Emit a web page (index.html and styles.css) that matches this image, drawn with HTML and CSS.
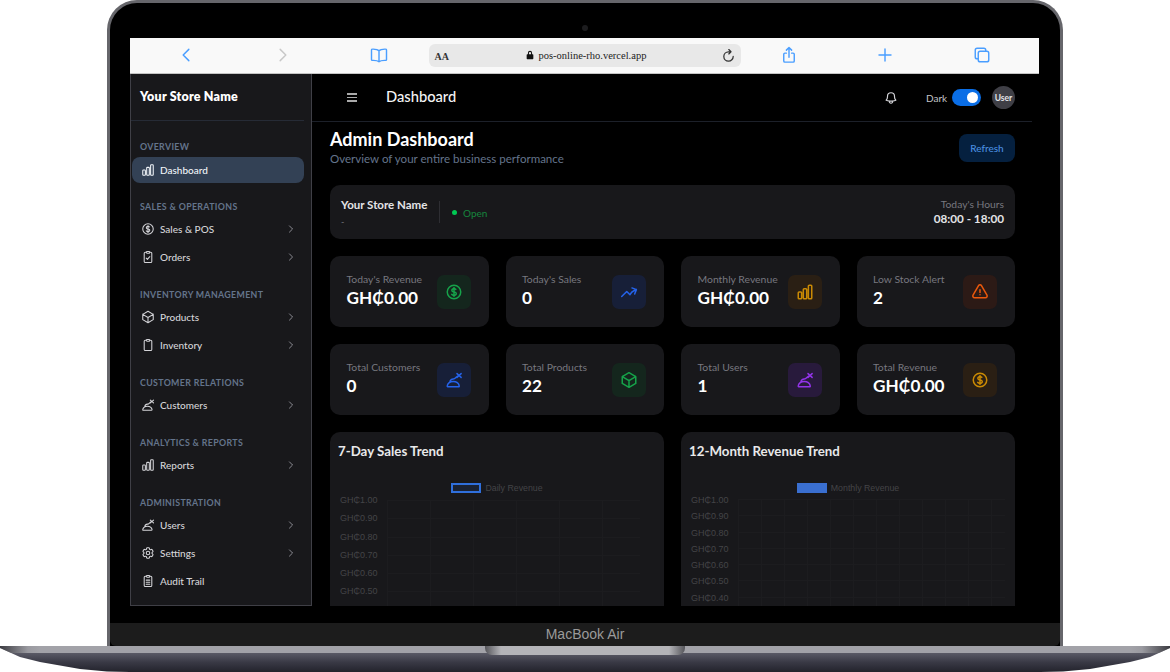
FILE: index.html
```html
<!DOCTYPE html>
<html lang="en">
<head>
  <meta charset="UTF-8">
  <meta name="viewport" content="width=device-width, initial-scale=1.0">
  <title>MacBook Air mockup - Dashboard</title>
  <link rel="stylesheet" href="styles.css">
</head>
<body>

<svg class="sprite" xmlns="http://www.w3.org/2000/svg">
  <symbol id="i-chart" viewBox="0 0 24 24"><path d="M3 13.125C3 12.504 3.504 12 4.125 12h2.25c.621 0 1.125.504 1.125 1.125v6.75C7.5 20.496 6.996 21 6.375 21h-2.25A1.125 1.125 0 0 1 3 19.875v-6.75ZM9.75 8.625c0-.621.504-1.125 1.125-1.125h2.25c.621 0 1.125.504 1.125 1.125v11.25c0 .621-.504 1.125-1.125 1.125h-2.25a1.125 1.125 0 0 1-1.125-1.125V8.625ZM16.5 4.125c0-.621.504-1.125 1.125-1.125h2.25C20.496 3 21 3.504 21 4.125v15.75c0 .621-.504 1.125-1.125 1.125h-2.25a1.125 1.125 0 0 1-1.125-1.125V4.125Z"/></symbol>
  <symbol id="i-dollar" viewBox="0 0 24 24"><path d="M12 6v12m-3-2.818.879.659c1.171.879 3.07.879 4.242 0 1.172-.879 1.172-2.303 0-3.182C13.536 12.219 12.768 12 12 12c-.725 0-1.45-.22-2.003-.659-1.106-.879-1.106-2.303 0-3.182s2.9-.879 4.006 0l.415.33M21 12a9 9 0 1 1-18 0 9 9 0 0 1 18 0Z"/></symbol>
  <symbol id="i-cube" viewBox="0 0 24 24"><path d="m21 7.5-9-5.25L3 7.5m18 0-9 5.25m9-5.25v9l-9 5.25M3 7.5l9 5.25M3 7.5v9l9 5.25m0-9v9"/></symbol>
  <symbol id="i-trend" viewBox="0 0 24 24"><path d="M2.25 18 9 11.25l4.306 4.306a11.95 11.95 0 0 1 5.814-5.518l2.74-1.22m0 0-5.94-2.281m5.94 2.28-2.28 5.941"/></symbol>
  <symbol id="i-alert" viewBox="0 0 24 24"><path d="M12 9v3.75m-9.303 3.376c-.866 1.5.217 3.374 1.948 3.374h14.71c1.73 0 2.813-1.874 1.948-3.374L13.949 3.378c-.866-1.5-3.032-1.5-3.898 0L2.697 16.126ZM12 15.75h.007v.008H12v-.008Z"/></symbol>
  <symbol id="i-bell" viewBox="0 0 24 24"><path d="M14.857 17.082a23.848 23.848 0 0 0 5.454-1.31A8.967 8.967 0 0 1 18 9.75V9A6 6 0 0 0 6 9v.75a8.967 8.967 0 0 1-2.312 6.022c1.733.64 3.56 1.085 5.455 1.31m5.714 0a24.255 24.255 0 0 1-5.714 0m5.714 0a3 3 0 1 1-5.714 0"/></symbol>
  <symbol id="i-people" viewBox="0 0 24 24"><path d="M3.500 21h14.500c.8 0 1.200-.6 1-1.300-.8-3.400-4-5.700-8-5.700s-7.200 2.300-8 5.700c-.2.700.2 1.300.5 1.300ZM6.500 14.500c.5-2.500 2-4 4.500-4 3 0 3.500-3 6.500-4M16 3.500l5.500 5M21.500 3.500l-5.500 5"/></symbol>
  <symbol id="i-orders" viewBox="0 0 24 24"><path d="M9 4H7.500C6.400 4 5.500 4.900 5.500 6v13.500c0 1.100.9 2 2 2h9c1.100 0 2-.9 2-2V6c0-1.100-.9-2-2-2H15M9 4c0-1 .7-1.500 1.500-1.500h3C14.300 2.500 15 3 15 4s-.7 1.500-1.500 1.500h-3C9.700 5.500 9 5 9 4ZM9 14l2 2 4-4.500"/></symbol>
  <symbol id="i-board" viewBox="0 0 24 24"><path d="M9 4H7.500C6.400 4 5.500 4.900 5.500 6v13.500c0 1.100.9 2 2 2h9c1.100 0 2-.9 2-2V6c0-1.100-.9-2-2-2H15M9 4c0-1 .7-1.500 1.500-1.500h3C14.300 2.500 15 3 15 4s-.7 1.500-1.500 1.500h-3C9.700 5.500 9 5 9 4Z"/></symbol>
  <symbol id="i-audit" viewBox="0 0 24 24"><path d="M9 4H7.500C6.400 4 5.500 4.900 5.500 6v13.500c0 1.100.9 2 2 2h9c1.100 0 2-.9 2-2V6c0-1.100-.9-2-2-2H15M9 4c0-1 .7-1.500 1.500-1.500h3C14.300 2.500 15 3 15 4s-.7 1.500-1.500 1.500h-3C9.700 5.500 9 5 9 4ZM9 10.500h6M9 14h6M9 17.500h6"/></symbol>
  <symbol id="i-cog" viewBox="0 0 24 24"><path d="M9.594 3.940c.09-.542.56-.94 1.110-.94h2.593c.55 0 1.020.398 1.110.94l.213 1.281c.063.374.313.686.645.87.074.04.147.083.22.127.325.196.72.257 1.075.124l1.217-.456a1.125 1.125 0 0 1 1.370.49l1.296 2.247a1.125 1.125 0 0 1-.26 1.431l-1.003.827c-.293.241-.438.613-.43.992a7.723 7.723 0 0 1 0 .255c-.008.378.137.75.43.991l1.004.827c.424.35.534.955.26 1.430l-1.298 2.247a1.125 1.125 0 0 1-1.369.491l-1.217-.456c-.355-.133-.75-.072-1.076.124a6.470 6.470 0 0 1-.22.128c-.331.183-.581.495-.644.869l-.213 1.281c-.09.543-.56.94-1.110.94h-2.594c-.55 0-1.019-.398-1.110-.94l-.213-1.281c-.062-.374-.312-.686-.644-.87a6.520 6.520 0 0 1-.22-.127c-.325-.196-.72-.257-1.076-.124l-1.217.456a1.125 1.125 0 0 1-1.369-.49l-1.297-2.247a1.125 1.125 0 0 1 .26-1.431l1.004-.827c.292-.24.437-.613.43-.991a6.932 6.932 0 0 1 0-.255c.007-.38-.138-.751-.43-.992l-1.004-.827a1.125 1.125 0 0 1-.26-1.430l1.297-2.247a1.125 1.125 0 0 1 1.370-.491l1.216.456c.356.133.751.072 1.076-.124.072-.044.146-.086.22-.128.332-.183.582-.495.644-.869l.214-1.280Z"/><path d="M15 12a3 3 0 1 1-6 0 3 3 0 0 1 6 0Z"/></symbol>
  <symbol id="i-next" viewBox="0 0 24 24"><path d="m8.250 4.500 7.500 7.500-7.500 7.500"/></symbol>
  <symbol id="i-back" viewBox="0 0 24 24"><path d="M15.750 19.500 8.250 12l7.500-7.500"/></symbol>
</svg>

<div class="lid">
  <div class="camera-row"><span class="camera"></span></div>

  <div class="screen">
    <div class="safari-bar">
      <div class="bar-slot"><svg class="bar-icon"><use href="#i-back"/></svg></div>
      <div class="bar-slot"><svg class="bar-icon bar-icon-off"><use href="#i-next"/></svg></div>
      <div class="bar-slot">
        <svg class="bar-icon" viewBox="0 0 24 24"><path d="M12 6.500C10.500 4.800 8 4 3 4.200c-.6 0-1 .5-1 1v13c0 .6.5 1 1 1 4.500-.2 7.500.4 9 1.800 1.500-1.400 4.500-2 9-1.800.5 0 1-.4 1-1v-13c0-.5-.4-1-1-1-5-.2-7.500.6-9 2.300ZM12 6.500V21"/></svg>
      </div>
      <div class="url-bar">
        <span class="url-aa">AA</span>
        <span class="url-text">
          <svg class="url-lock" viewBox="0 0 24 24"><path d="M7 10V7a5 5 0 0 1 10 0v3h1.500c.8 0 1.500.7 1.500 1.500v9c0 .8-.7 1.500-1.500 1.500h-13C4.700 22 4 21.300 4 20.500v-9C4 10.700 4.700 10 5.500 10H7Zm2.500 0h5V7a2.500 2.500 0 0 0-5 0v3Z"/></svg>
          pos-online-rho.vercel.app
        </span>
        <svg class="url-reload" viewBox="0 0 24 24"><path d="M19.500 13.500A7.500 7.500 0 1 1 12 6h3M12.500 2.500 16 6l-3.500 3.500"/></svg>
      </div>
      <div class="bar-slot">
        <svg class="bar-icon" viewBox="0 0 24 24"><path d="M8.500 9.500H6.500c-.8 0-1.500.7-1.500 1.500v9c0 .8.700 1.500 1.500 1.500h11c.8 0 1.500-.7 1.500-1.500v-9c0-.8-.7-1.500-1.500-1.500h-2M12 15V2M8.500 5.500 12 2l3.500 3.500"/></svg>
      </div>
      <div class="bar-slot">
        <svg class="bar-icon" viewBox="0 0 24 24"><path d="M12 4v16M4 12h16"/></svg>
      </div>
      <div class="bar-slot">
        <svg class="bar-icon" viewBox="0 0 24 24"><path d="M7 17H5.500C4.100 17 3 15.900 3 14.500v-9C3 4.100 4.100 3 5.500 3h9C15.900 3 17 4.100 17 5.500V7"/><rect x="7" y="7" width="14" height="14" rx="2.500"/></svg>
      </div>
    </div>

    <div class="app">
      <aside class="sidebar">
        <div class="brand">Your Store Name</div>
        <nav class="nav">
          <div class="nav-label nav-label-first">Overview</div>
          <a class="nav-item active"><svg class="nav-icon"><use href="#i-chart"/></svg>Dashboard</a>

          <div class="nav-label">Sales &amp; Operations</div>
          <a class="nav-item"><svg class="nav-icon"><use href="#i-dollar"/></svg>Sales &amp; POS<svg class="nav-arrow"><use href="#i-next"/></svg></a>
          <a class="nav-item"><svg class="nav-icon"><use href="#i-orders"/></svg>Orders<svg class="nav-arrow"><use href="#i-next"/></svg></a>

          <div class="nav-label">Inventory Management</div>
          <a class="nav-item"><svg class="nav-icon"><use href="#i-cube"/></svg>Products<svg class="nav-arrow"><use href="#i-next"/></svg></a>
          <a class="nav-item"><svg class="nav-icon"><use href="#i-board"/></svg>Inventory<svg class="nav-arrow"><use href="#i-next"/></svg></a>

          <div class="nav-label">Customer Relations</div>
          <a class="nav-item"><svg class="nav-icon"><use href="#i-people"/></svg>Customers<svg class="nav-arrow"><use href="#i-next"/></svg></a>

          <div class="nav-label">Analytics &amp; Reports</div>
          <a class="nav-item"><svg class="nav-icon"><use href="#i-chart"/></svg>Reports<svg class="nav-arrow"><use href="#i-next"/></svg></a>

          <div class="nav-label">Administration</div>
          <a class="nav-item"><svg class="nav-icon"><use href="#i-people"/></svg>Users<svg class="nav-arrow"><use href="#i-next"/></svg></a>
          <a class="nav-item"><svg class="nav-icon"><use href="#i-cog"/></svg>Settings<svg class="nav-arrow"><use href="#i-next"/></svg></a>
          <a class="nav-item"><svg class="nav-icon"><use href="#i-audit"/></svg>Audit Trail</a>
        </nav>
      </aside>

      <main class="main">
        <header class="topbar">
          <div class="burger"><span></span><span></span><span></span></div>
          <div class="topbar-title">Dashboard</div>
          <svg class="bell"><use href="#i-bell"/></svg>
          <span class="theme-label">Dark</span>
          <span class="toggle"><span class="knob"></span></span>
          <span class="avatar">User</span>
        </header>

        <div class="content">
          <div class="page-head">
            <div>
              <h1>Admin Dashboard</h1>
              <p>Overview of your entire business performance</p>
            </div>
            <button class="refresh">Refresh</button>
          </div>

          <section class="store-card">
            <div class="store-info">
              <div class="store-name">Your Store Name</div>
              <div class="store-addr">-</div>
            </div>
            <span class="store-divider"></span>
            <div class="store-status"><span class="status-dot"></span>Open</div>
            <div class="store-hours">
              <div class="hours-label">Today's Hours</div>
              <div class="hours-value">08:00 - 18:00</div>
            </div>
          </section>

          <section class="stats">
            <div class="stat">
              <div class="stat-text"><div class="stat-label">Today's Revenue</div><div class="stat-value">GH₵0.00</div></div>
              <div class="stat-icon green"><svg><use href="#i-dollar"/></svg></div>
            </div>
            <div class="stat">
              <div class="stat-text"><div class="stat-label">Today's Sales</div><div class="stat-value">0</div></div>
              <div class="stat-icon blue"><svg><use href="#i-trend"/></svg></div>
            </div>
            <div class="stat">
              <div class="stat-text"><div class="stat-label">Monthly Revenue</div><div class="stat-value">GH₵0.00</div></div>
              <div class="stat-icon amber"><svg><use href="#i-chart"/></svg></div>
            </div>
            <div class="stat">
              <div class="stat-text"><div class="stat-label">Low Stock Alert</div><div class="stat-value">2</div></div>
              <div class="stat-icon red"><svg><use href="#i-alert"/></svg></div>
            </div>
            <div class="stat">
              <div class="stat-text"><div class="stat-label">Total Customers</div><div class="stat-value">0</div></div>
              <div class="stat-icon blue"><svg><use href="#i-people"/></svg></div>
            </div>
            <div class="stat">
              <div class="stat-text"><div class="stat-label">Total Products</div><div class="stat-value">22</div></div>
              <div class="stat-icon green"><svg><use href="#i-cube"/></svg></div>
            </div>
            <div class="stat">
              <div class="stat-text"><div class="stat-label">Total Users</div><div class="stat-value">1</div></div>
              <div class="stat-icon purple"><svg><use href="#i-people"/></svg></div>
            </div>
            <div class="stat">
              <div class="stat-text"><div class="stat-label">Total Revenue</div><div class="stat-value">GH₵0.00</div></div>
              <div class="stat-icon amber"><svg><use href="#i-dollar"/></svg></div>
            </div>
          </section>

          <section class="charts">
            <div class="chart-card">
              <h3>7-Day Sales Trend</h3>
              <div class="legend"><span class="swatch swatch-line"></span>Daily Revenue</div>
              <div class="chart-body chart-week">
                <div class="y-axis">
                  <span>GH₵1.00</span><span>GH₵0.90</span><span>GH₵0.80</span>
                  <span>GH₵0.70</span><span>GH₵0.60</span><span>GH₵0.50</span>
                </div>
                <div class="plot"></div>
              </div>
            </div>
            <div class="chart-card">
              <h3>12-Month Revenue Trend</h3>
              <div class="legend"><span class="swatch swatch-fill"></span>Monthly Revenue</div>
              <div class="chart-body chart-year">
                <div class="y-axis">
                  <span>GH₵1.00</span><span>GH₵0.90</span><span>GH₵0.80</span>
                  <span>GH₵0.70</span><span>GH₵0.60</span><span>GH₵0.50</span><span>GH₵0.40</span>
                </div>
                <div class="plot"></div>
              </div>
            </div>
          </section>
        </div>
      </main>
    </div>
  </div>

  <div class="hinge">MacBook Air</div>
</div>

<div class="base"><div class="notch"></div></div>

</body>
</html>
```

FILE: styles.css
```css
* {
  box-sizing: border-box;
}
html, body {
  margin: 0;
  height: 672px;
  overflow: hidden;
  background: #fff;
}
body {
  font-family: Lato, "Noto Sans", sans-serif;
  color: #fff;
}
.sprite {
  display: none;
}
svg {
  fill: none;
  stroke: currentColor;
  stroke-width: 1.5;
  stroke-linecap: round;
  stroke-linejoin: round;
}

/* laptop shell */
.lid {
  width: 956px;
  height: 646px;
  margin-left: 107px;
  background: #000;
  border: 3px solid #66666b;
  border-bottom: 0;
  border-radius: 30px 30px 0 0;
}
.camera-row {
  height: 35px;
  display: flex;
  align-items: center;
  justify-content: center;
  padding-top: 14px;
}
.camera {
  width: 6px;
  height: 6px;
  border-radius: 50%;
  background: #1c1c1e;
}
.screen {
  width: 909px;
  height: 568px;
  margin-left: 20px;
  background: #000;
  overflow: hidden;
}
.hinge {
  height: 23px;
  margin-top: 17px;
  background: #1c1c1c;
  border-radius: 0 0 6px 6px;
  color: #9a9a9a;
  font-family: "Liberation Sans", sans-serif;
  font-size: 14px;
  line-height: 23px;
  text-align: center;
}
.base {
  height: 26px;
  display: flex;
  justify-content: center;
  background:
    linear-gradient(90deg, #3c3c42 0, #9a9aa0 28px, transparent 40px, transparent 1130px, #9a9aa0 1142px, #3c3c42 1170px) 0 0 / 100% 7px no-repeat,
    linear-gradient(#a2a2a8 0, #a2a2a8 7px, #5a5a66 7px, #3a3a46 16px, #23232c 100%);
  clip-path: polygon(0 2px, 20px 11px, 40px 16px, 80px 23px, 107px 25.500px, 130px 26px, 1040px 26px, 1063px 25.500px, 1090px 23px, 1130px 16px, 1150px 11px, 1170px 2px, 1170px 0, 0 0);
}
.notch {
  width: 200px;
  height: 9px;
  background: linear-gradient(90deg, #55555a, #b4b4b8 8%, #b4b4b8 92%, #55555a);
  border-radius: 0 0 7px 7px;
}

/* safari toolbar */
.safari-bar {
  height: 36px;
  padding: 0 0 1px 8px;
  display: flex;
  align-items: center;
  background: #f9f9f9;
  border-bottom: 1px solid #c4c4c4;
}
.bar-slot {
  width: 96.500px;
  display: flex;
  justify-content: center;
}
.bar-icon {
  width: 18px;
  height: 18px;
  color: #4a9eff;
  stroke-width: 1.900;
}
.bar-icon-off {
  color: #c8c8c8;
}
.url-bar {
  width: 312px;
  height: 23px;
  margin-left: 1px;
  padding: 0 5px 0 6px;
  display: flex;
  align-items: center;
  background: #e8e8e8;
  border-radius: 6px;
  color: #222;
  font-family: "Liberation Serif", serif;
}
.url-aa {
  font-size: 10px;
  font-weight: 700;
  width: 90px;
  padding-top: 2px;
  color: #333;
}
.url-text {
  flex: 1;
  display: flex;
  align-items: center;
  gap: 4px;
  font-size: 10.500px;
}
.url-lock {
  width: 10px;
  height: 10px;
  fill: #111;
  stroke: none;
}
.url-reload {
  width: 15px;
  height: 15px;
  color: #333;
  stroke-width: 2;
}

/* app */
.app {
  height: 532px;
  display: flex;
}
.sidebar {
  width: 182px;
  background: #18181b;
  border: 1px solid #3f3f46;
  border-width: 0 1px 1px 1px;
  padding-right: 7px;
}
.brand {
  height: 47px;
  padding-left: 9px;
  border-bottom: 1px solid #262b36;
  font-size: 12.500px;
  font-weight: 800;
  letter-spacing: 0.2px;
  line-height: 45px;
}
.nav {
  display: flex;
  flex-direction: column;
}
.nav-label {
  height: 12px;
  margin: 18px 0 2px 9px;
  color: #64748b;
  font-size: 8.800px;
  font-weight: 700;
  letter-spacing: 0.35px;
  line-height: 12px;
  text-transform: uppercase;
}
.nav-label-first {
  margin: 20px 0 3px 9px;
}
.nav-item {
  height: 26px;
  flex: none;
  margin: 1px 0 1px 1px;
  padding: 0 9px;
  display: flex;
  align-items: center;
  border-radius: 8px;
  color: #d4d4d8;
  font-size: 10px;
  font-weight: 500;
}
.nav-item.active {
  margin-bottom: 0;
  background: #334155;
  color: #f1f5f9;
}
.nav-icon {
  width: 14px;
  height: 14px;
  margin-right: 5px;
  flex: none;
  stroke-width: 1.800;
}
.nav-arrow {
  width: 10px;
  height: 10px;
  margin-left: auto;
  margin-right: -1px;
  color: #a1a1aa;
  stroke-width: 2;
}

/* top bar */
.main {
  flex: 1;
  min-width: 0;
  padding-right: 7px;
  background: #000;
  overflow: hidden;
}
.topbar {
  height: 48px;
  padding: 0 17px 0 35px;
  display: flex;
  align-items: center;
  border-bottom: 1px solid #1c2029;
}
.burger {
  width: 10px;
  display: flex;
  flex-direction: column;
  gap: 2px;
}
.burger span {
  height: 1.500px;
  background: #aaa;
}
.topbar-title {
  flex: 1;
  margin: 0 0 4px 29px;
  font-size: 14.700px;
  font-weight: 500;
  color: #f4f4f5;
}
.bell {
  width: 14px;
  height: 14px;
  margin-right: 28px;
  color: #d4d4d8;
  stroke-width: 2;
}
.theme-label {
  width: 26px;
  color: #c4c4c8;
  font-size: 10px;
}
.toggle {
  width: 29px;
  height: 17px;
  padding: 3px 3px 3px 0;
  display: flex;
  justify-content: flex-end;
  background: #0a6ee6;
  border-radius: 9px;
}
.knob {
  width: 11px;
  height: 11px;
  border-radius: 50%;
  background: #fff;
}
.avatar {
  width: 23px;
  height: 23px;
  margin-left: 11px;
  display: flex;
  align-items: center;
  justify-content: center;
  border-radius: 50%;
  background: #3f3f46;
  color: #e4e4e7;
  font-size: 8.500px;
  font-weight: 700;
}

/* page */
.content {
  padding: 7px 17px 0 18px;
}
.page-head {
  display: flex;
  justify-content: space-between;
  align-items: flex-start;
  margin-bottom: 19px;
}
h1 {
  margin: 0;
  font-size: 18px;
  font-weight: 700;
  line-height: 20px;
}
.page-head p {
  margin: 3px 0 0;
  color: #64748b;
  font-size: 11.550px;
  line-height: 14px;
}
.refresh {
  width: 56px;
  height: 28px;
  margin-top: 5px;
  background: #05203f;
  border: 0;
  border-radius: 8px;
  color: #4a8fe0;
  font-family: inherit;
  font-size: 10px;
  font-weight: 500;
}
.store-card {
  height: 54px;
  margin-bottom: 17px;
  padding: 0 11px;
  display: flex;
  align-items: center;
  background: #18181b;
  border-radius: 10px;
}
.store-info {
  width: 98px;
}
.store-name {
  font-size: 11.500px;
  font-weight: 700;
  color: #e4e4e7;
  line-height: 15px;
}
.store-addr {
  margin-top: 4px;
  font-size: 9px;
  color: #71717a;
  line-height: 12px;
}
.store-divider {
  width: 1px;
  height: 22px;
  background: #2e2e33;
}
.store-status {
  flex: 1;
  margin: 1px 0 0 12px;
  display: flex;
  align-items: center;
  gap: 6px;
  color: #16863d;
  font-size: 10px;
}
.status-dot {
  width: 5px;
  height: 5px;
  border-radius: 50%;
  background: #00c853;
}
.store-hours {
  padding-bottom: 2px;
  text-align: right;
}
.hours-label {
  color: #77777f;
  font-size: 10.300px;
  line-height: 14px;
}
.hours-value {
  color: #e4e4e7;
  font-size: 11.700px;
  font-weight: 700;
  line-height: 15px;
}
.stats {
  display: grid;
  grid-template-columns: repeat(4, 1fr);
  gap: 17px;
}
.stat {
  height: 71px;
  padding: 0 18px 0 16.500px;
  display: flex;
  align-items: center;
  justify-content: space-between;
  background: #18181b;
  border-radius: 10px;
}
.stat-text {
  margin-bottom: 2px;
}
.stat-label {
  color: #77777f;
  font-size: 10.400px;
  line-height: 14px;
}
.stat-value {
  font-size: 17.200px;
  font-weight: 700;
  line-height: 24px;
}
.stat-icon {
  width: 34px;
  height: 34px;
  display: flex;
  align-items: center;
  justify-content: center;
  border-radius: 7px;
}
.stat-icon svg {
  width: 18px;
  height: 18px;
  stroke-width: 2;
}
.green { background: #14261d; color: #16a34a; }
.blue { background: #171f38; color: #2563eb; }
.amber { background: #2a1f14; color: #ca8a04; }
.red { background: #2c1a16; color: #ea580c; }
.purple { background: #281a3c; color: #9333ea; }

/* charts */
.charts {
  display: grid;
  grid-template-columns: 1fr 1fr;
  gap: 17px;
  margin-top: 17px;
}
.chart-card {
  height: 190px;
  padding: 10px 8px 0;
  background: #18181b;
  border-radius: 10px;
  font-family: "Liberation Sans", sans-serif;
}
h3 {
  margin: 0;
  color: #e8e8ea;
  font-family: Lato, "Noto Sans", sans-serif;
  font-size: 13.300px;
  font-weight: 700;
  line-height: 18px;
}
.legend {
  height: 12px;
  margin-top: 22px;
  display: flex;
  align-items: center;
  justify-content: center;
  gap: 4px;
  color: #444447;
  font-size: 8.800px;
}
.swatch {
  width: 30px;
  height: 10px;
}
.swatch-line {
  background: #1a2233;
  border: 2px solid #2f6fdc;
}
.swatch-fill {
  background: #3a6fd0;
}
.chart-body {
  display: flex;
  margin-top: -3px;
  color: #444447;
  font-size: 9px;
}
.y-axis {
  margin-left: 2px;
  display: flex;
  flex-direction: column;
}
.chart-year .y-axis {
  margin-top: 1px;
}
.plot {
  flex: 1;
  height: 130px;
}
.chart-week .y-axis span {
  height: 18.300px;
  line-height: 18.300px;
}
.chart-year .y-axis span {
  height: 16.300px;
  line-height: 16.300px;
}
.chart-week .plot {
  margin: 9px 16px 0 9px;
  background:
    repeating-linear-gradient(90deg, #1c1c1f 0 1px, transparent 1px 43px),
    repeating-linear-gradient(180deg, #1c1c1f 0 1px, transparent 1px 18.300px);
}
.chart-year .plot {
  margin: 8px 2px 0 9px;
  background:
    repeating-linear-gradient(90deg, #1c1c1f 0 1px, transparent 1px 23px),
    repeating-linear-gradient(180deg, #1c1c1f 0 1px, transparent 1px 16.300px);
}
```
